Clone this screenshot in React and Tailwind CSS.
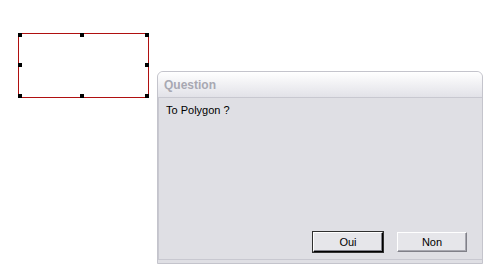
import React from 'react';

function Handle({ className }) {
  return <span className={`absolute w-[4px] h-[4px] bg-black ${className}`} />;
}

function Btn({ label, focused }) {
  return (
    <button
      className={`w-[70px] h-[20px] bg-[#e6e6ea] text-[11px] text-black leading-none flex items-center justify-center border ${
        focused
          ? 'border-t-[#ffffff] border-l-[#ffffff] border-r-black border-b-black shadow-[inset_-1px_-1px_0_#808088,0_0_0_1px_#303030]'
          : 'border-t-[#ffffff] border-l-[#ffffff] border-r-[#808088] border-b-[#808088] shadow-[inset_-1px_-1px_0_#a8a8b0]'
      }`}
    >
      {label}
    </button>
  );
}

export default function App() {
  return (
    <div className="w-[494px] h-[276px] bg-white flex items-start font-['Liberation_Sans',Arial,sans-serif]">
      {/* selected rectangle */}
      <div className="relative ml-[18px] mt-[33px] w-[131px] h-[65px] border border-[#b01010]">
        <Handle className="-left-[1px] -top-[1px]" />
        <Handle className="left-[61px] -top-[1px]" />
        <Handle className="-right-[1px] -top-[1px]" />
        <Handle className="-left-[1px] top-[29px]" />
        <Handle className="-right-[1px] top-[29px]" />
        <Handle className="-left-[1px] -bottom-[1px]" />
        <Handle className="left-[61px] -bottom-[1px]" />
        <Handle className="-right-[1px] -bottom-[1px]" />
      </div>

      {/* dialog */}
      <div className="ml-[8px] mt-[71px] w-[326px] h-[193px] flex flex-col border border-[#c4c4cc] rounded-t-[6px] bg-[#dfdfe4] overflow-hidden">
        <div className="h-[26px] shrink-0 flex items-center pl-[6px] bg-gradient-to-b from-[#ffffff] to-[#e2e2e8] border-b border-[#c8c8d0]">
          <span className="text-[12px] font-bold text-[#a8a8b2]">Question</span>
        </div>
        <div className="flex-1 flex flex-col border-b border-l border-[#c8c8d0] mb-[3px]">
          <div className="pl-[7px] pt-[6px] text-[11px] text-black leading-[13px]">To Polygon ?</div>
          <div className="mt-auto mb-[7px] mr-[15px] flex justify-end gap-[14px]">
            <Btn label="Oui" focused />
            <Btn label="Non" />
          </div>
        </div>
      </div>
    </div>
  );
}
